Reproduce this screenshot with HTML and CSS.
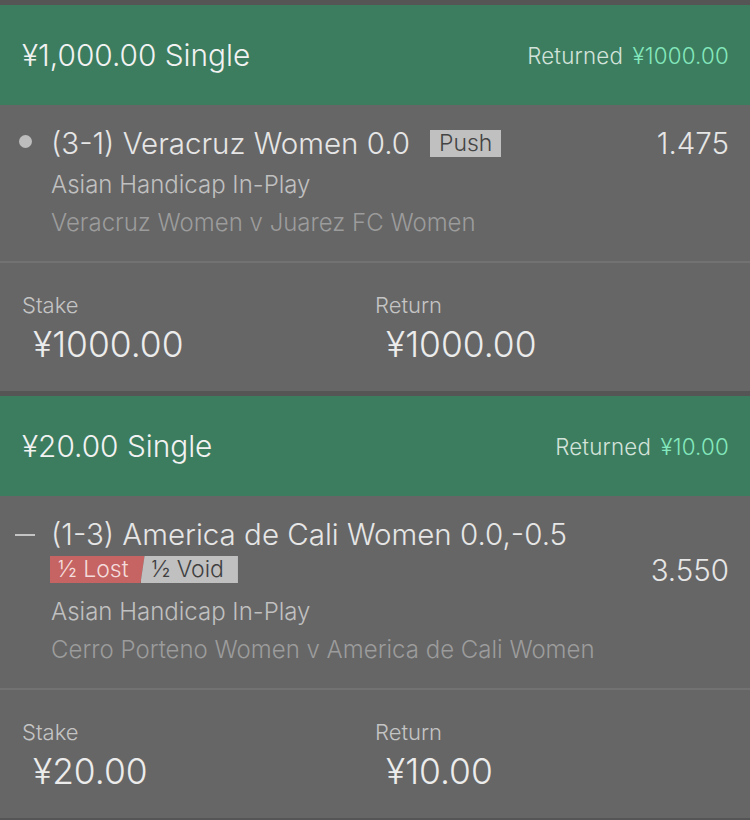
FILE: index.html
```html
<!DOCTYPE html>
<html lang="en">
<head>
  <meta charset="UTF-8">
  <meta name="viewport" content="width=device-width, initial-scale=1.0">
  <title>Settled Bets</title>
  <link rel="stylesheet" href="styles.css">
</head>
<body>
  <div class="bet">
    <div class="bet-header">
      <span class="bet-title">¥1,000.00 Single</span>
      <span class="returned">Returned <span class="returned-value">¥1000.00</span></span>
    </div>
    <div class="selection">
      <div class="marker"><span class="dot"></span></div>
      <div class="sel-info">
        <div class="sel-name">(3-1) Veracruz Women 0.0 <span class="badge badge-push">Push</span></div>
        <div class="sel-market">Asian Handicap In-Play</div>
        <div class="sel-event">Veracruz Women v Juarez FC Women</div>
      </div>
      <div class="odds">1.475</div>
    </div>
    <div class="totals">
      <div class="total">
        <div class="total-label">Stake</div>
        <div class="total-value">¥1000.00</div>
      </div>
      <div class="total">
        <div class="total-label">Return</div>
        <div class="total-value">¥1000.00</div>
      </div>
    </div>
  </div>

  <div class="bet">
    <div class="bet-header">
      <span class="bet-title">¥20.00 Single</span>
      <span class="returned">Returned <span class="returned-value">¥10.00</span></span>
    </div>
    <div class="selection">
      <div class="marker"><span class="dash"></span></div>
      <div class="sel-info">
        <div class="sel-name">(1-3) America de Cali Women 0.0,-0.5</div>
        <div class="sel-badges">
          <span class="badge badge-lost">½ Lost</span><span class="badge badge-void">½ Void</span>
        </div>
        <div class="sel-market sel-market-split">Asian Handicap In-Play</div>
        <div class="sel-event">Cerro Porteno Women v America de Cali Women</div>
      </div>
      <div class="odds odds-low">3.550</div>
    </div>
    <div class="totals">
      <div class="total">
        <div class="total-label">Stake</div>
        <div class="total-value">¥20.00</div>
      </div>
      <div class="total">
        <div class="total-label">Return</div>
        <div class="total-value">¥10.00</div>
      </div>
    </div>
  </div>
</body>
</html>
```

FILE: styles.css
```css
body {
  margin: 0;
  padding: 0;
  background-color: #555;
  font-family: Inter, "Noto Sans", sans-serif;
  font-weight: 300;
  color: #e8e8e8;
}
.bet {
  padding-top: 5px;
}
.bet-header {
  height: 100px;
  background-color: #3c7d5f;
  display: flex;
  align-items: center;
  justify-content: space-between;
  padding: 0 21px 0 22px;
}
.bet-title {
  font-size: 29.8px;
  color: #f2f2f2;
}
.returned {
  font-size: 22.3px;
  color: #d3e3da;
  letter-spacing: 0.2px;
}
.returned-value {
  color: #84e8bd;
  margin-left: 3px;
}
.selection {
  background-color: #666;
  display: flex;
  padding: 22px 21px 24px 0;
  border-bottom: 2px solid #727272;
}
.marker {
  width: 51px;
  display: flex;
  justify-content: center;
  padding-top: 8px;
}
.dot {
  width: 13px;
  height: 13px;
  border-radius: 50%;
  background-color: #bdbdbd;
}
.dash {
  width: 20px;
  height: 2px;
  background-color: #c4c4c4;
  margin-top: 8px;
  margin-left: -2px;
}
.sel-info {
  flex: 1;
}
.sel-name {
  font-size: 29.5px;
  line-height: 32px;
  color: #e6e6e6;
  display: flex;
  align-items: center;
}
.sel-market {
  font-size: 24px;
  line-height: 28px;
  margin-top: 12px;
  color: #c0c0c0;
}
.sel-market-split {
  margin-top: 15px;
}
.sel-event {
  font-size: 24px;
  line-height: 28px;
  margin-top: 10px;
  color: #9c9c9c;
}
.sel-badges {
  display: flex;
  margin-top: 6px;
}
.badge {
  font-size: 23px;
  line-height: 27px;
  padding: 0 9px;
}
.badge-push {
  background-color: #c0c0c0;
  color: #444;
  margin-left: 20px;
}
.badge-lost {
  background-color: #c56462;
  color: #f4dcdc;
  clip-path: polygon(0 0, 100% 0, calc(100% - 4px) 100%, 0 100%);
  padding-left: 8px;
  padding-right: 16px;
  margin-left: -1px;
}
.badge-void {
  background-color: #c0c0c0;
  color: #3f3f3f;
  margin-left: -4px;
  padding-left: 11px;
  padding-right: 14px;
  clip-path: polygon(4px 0, 100% 0, 100% 100%, 0 100%);
}
.odds {
  font-size: 29.5px;
  line-height: 32px;
  color: #e6e6e6;
}
.odds-low {
  margin-top: 36px;
}
.totals {
  background-color: #666;
  display: flex;
  padding: 29px 0 26px 22px;
}
.total {
  width: 353px;
}
.total-label {
  font-size: 22px;
  line-height: 26px;
  color: #c4c4c4;
}
.total-value {
  font-size: 35.4px;
  line-height: 40px;
  margin-top: 7px;
  margin-left: 11px;
  color: #ececec;
}
```
